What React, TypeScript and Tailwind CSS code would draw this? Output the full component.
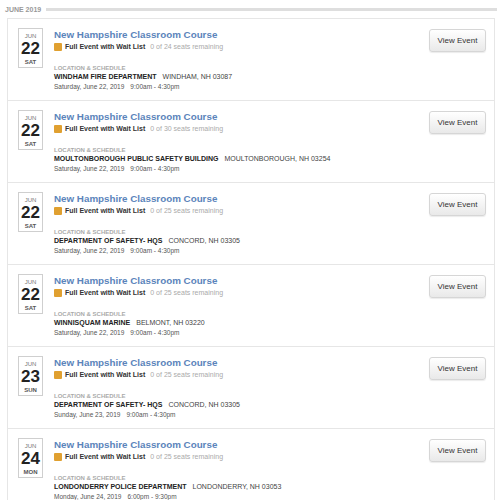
const events = [
  { day: '22', dow: 'SAT', seats: 24, place: 'WINDHAM FIRE DEPARTMENT', city: 'WINDHAM, NH 03087', date: 'Saturday, June 22, 2019', time: '9:00am - 4:30pm' },
  { day: '22', dow: 'SAT', seats: 30, place: 'MOULTONBOROUGH PUBLIC SAFETY BUILDING', city: 'MOULTONBOROUGH, NH 03254', date: 'Saturday, June 22, 2019', time: '9:00am - 4:30pm' },
  { day: '22', dow: 'SAT', seats: 25, place: 'DEPARTMENT OF SAFETY- HQS', city: 'CONCORD, NH 03305', date: 'Saturday, June 22, 2019', time: '9:00am - 4:30pm' },
  { day: '22', dow: 'SAT', seats: 25, place: 'WINNISQUAM MARINE', city: 'BELMONT, NH 03220', date: 'Saturday, June 22, 2019', time: '9:00am - 4:30pm' },
  { day: '23', dow: 'SUN', seats: 25, place: 'DEPARTMENT OF SAFETY- HQS', city: 'CONCORD, NH 03305', date: 'Sunday, June 23, 2019', time: '9:00am - 4:30pm' },
  { day: '24', dow: 'MON', seats: 25, place: 'LONDONDERRY POLICE DEPARTMENT', city: 'LONDONDERRY, NH 03053', date: 'Monday, June 24, 2019', time: '6:00pm - 9:30pm' },
];

function EventRow({ ev }: { ev: (typeof events)[number] }) {
  return (
    <div className="flex h-[82px] items-start border-b border-[#e6e6e6] pt-[9px] pl-[10px] pr-[8px]">
      <div className="flex h-[40px] w-[25px] shrink-0 flex-col items-center border border-[#cfcfcf] bg-white">
        <span className="mt-[4px] text-[6px] leading-[7px] text-[#777]">JUN</span>
        <span className="text-[17px] font-bold leading-[17px] text-[#222]">{ev.day}</span>
        <span className="mt-[2px] text-[6px] font-bold leading-[7px] text-[#555]">{ev.dow}</span>
      </div>
      <div className="ml-[11px] flex-1 whitespace-nowrap">
        <div className="mt-[1px] text-[9.8px] font-bold leading-[12px] text-[#5b84bb]">
          New Hampshire Classroom Course
        </div>
        <div className="flex items-center text-[7px] leading-[12px]">
          <span className="mr-[3px] inline-block h-[8px] w-[8px] rounded-[1px] bg-[#e0a030]" />
          <span className="font-bold text-[#333]">Full Event with Wait List</span>
          <span className="ml-[5px] text-[#aaa]">0 of {ev.seats} seats remaining</span>
        </div>
        <div className="mt-[11px] text-[6px] font-bold leading-[8px] text-[#aaa]">LOCATION &amp; SCHEDULE</div>
        <div className="text-[7px] leading-[10px]">
          <span className="font-bold text-[#222]">{ev.place}</span>
          <span className="ml-[6px] text-[#444]">{ev.city}</span>
        </div>
        <div className="text-[6.5px] leading-[9px] text-[#555]">
          {ev.date}
          <span className="ml-[6px]">{ev.time}</span>
        </div>
      </div>
      <button className="mt-[1px] h-[23px] w-[57px] shrink-0 rounded-[3px] border border-[#d6d6d6] bg-gradient-to-b from-white to-[#e9e9e9] text-[8px] text-[#333] shadow-[0_1px_1px_rgba(0,0,0,0.08)]">
        View Event
      </button>
    </div>
  );
}

export default function App() {
  return (
    <div className="h-[500px] w-[497px] overflow-hidden bg-white font-['Liberation_Sans',Arial,sans-serif]">
      <div className="flex items-center pt-[5px] pl-[5px]">
        <span className="text-[7px] font-bold leading-[9px] text-[#999]">JUNE 2019</span>
        <div className="ml-[5px] h-[3px] flex-1 bg-[#dedede]" />
      </div>
      <div className="ml-[7px] mt-[4px] mr-[2px] border-l border-r border-t border-[#e6e6e6]">
        {events.map((ev, i) => (
          <EventRow key={i} ev={ev} />
        ))}
      </div>
    </div>
  );
}
